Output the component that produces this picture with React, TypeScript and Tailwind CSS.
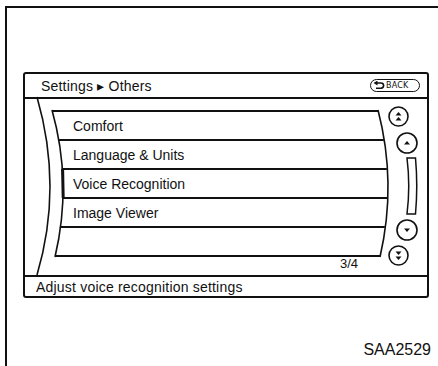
import React from "react";

type Kind = "up2" | "up" | "down" | "down2";

function ScrollButton({ kind, size }: { kind: Kind; size: number }) {
  const c = size / 2;
  const tri = (cy: number, dir: 1 | -1) =>
    `${c - 3},${cy + 1.5 * dir} ${c + 3},${cy + 1.5 * dir} ${c},${cy - 2 * dir}`;
  return (
    <svg width={size} height={size} viewBox={`0 0 ${size} ${size}`} className="block">
      <circle cx={c} cy={c} r={c - 1} fill="white" stroke="#111" strokeWidth="1.6" />
      {kind === "up" && <polygon points={tri(c, 1)} fill="#111" />}
      {kind === "down" && <polygon points={tri(c, -1)} fill="#111" />}
      {kind === "up2" && (
        <>
          <polygon points={tri(c - 2.5, 1)} fill="#111" />
          <polygon points={tri(c + 2.5, 1)} fill="#111" />
        </>
      )}
      {kind === "down2" && (
        <>
          <polygon points={tri(c - 2.5, -1)} fill="#111" />
          <polygon points={tri(c + 2.5, -1)} fill="#111" />
        </>
      )}
    </svg>
  );
}

function BackButton() {
  return (
    <div className="flex h-[13px] w-[50px] items-center rounded-full border-[1.5px] border-[#111] pl-[2px]">
      <svg width="12" height="9" viewBox="0 0 12 9" className="block">
        <path d="M4 2 H8 A2.6 2.6 0 0 1 8 7.2 H3" fill="none" stroke="#111" strokeWidth="1.6" />
        <polygon points="0.5,2 4.5,-0.5 4.5,4.5" fill="#111" />
      </svg>
      <span className="ml-[1px] text-[8px] leading-[8px] tracking-[0.2px] font-['DejaVu_Sans',sans-serif]">
        BACK
      </span>
    </div>
  );
}

const items = ["Comfort", "Language & Units", "Voice Recognition", "Image Viewer", ""];

export default function App() {
  return (
    <div className="h-[366px] w-[438px] overflow-hidden bg-white font-['Liberation_Sans',Arial,sans-serif] text-[#111]">
      {/* outer figure frame */}
      <div className="ml-[5px] mt-[6px] h-[360px] border-l-2 border-t-2 border-[#111] pl-[16px] pt-[64px]">
        {/* screen */}
        <div className="flex h-[226px] w-[406px] flex-col rounded-[3px] border-2 border-[#111]">
          <div className="flex h-[25px] shrink-0 items-center justify-between border-b-2 border-[#111] pl-[16px] pr-[7px]">
            <span className="text-[14px] leading-[14px] tracking-[0.2px]">Settings ▸ Others</span>
            <BackButton />
          </div>

          <div className="relative flex flex-1">
            <div className="flex w-[363px] shrink-0 flex-col">
              <div className="ml-[27px] mt-[11px] w-[336px] border-b-2 border-[#111] [clip-path:polygon(0px_0px,326px_0px,333px_36px,336px_73px,334px_110px,328px_147px,3px_147px,9px_110px,11px_73px,8px_36px)]">
                {items.map((label, i) => (
                  <div
                    key={i}
                    className="flex h-[29px] items-center border-t-2 border-[#111] pl-[21px] text-[14px] leading-[14px]"
                  >
                    {label}
                  </div>
                ))}
              </div>
              <div className="flex justify-end pr-[30px] text-[13px] leading-[14px]">3/4</div>
            </div>

            <div className="flex flex-col items-start">
              <div className="mt-[7px]">
                <ScrollButton kind="up2" size={21} />
              </div>
              <div className="ml-[8px] mt-[5px]">
                <ScrollButton kind="up" size={22} />
              </div>
              <svg width="12" height="58" viewBox="0 0 12 58" className="ml-[18px] mt-[3px] block">
                <path d="M1 1 H9.5 Q12 29 9.5 57 H1 Q4.5 29 1 1 Z" fill="white" stroke="#111" strokeWidth="1.5" />
              </svg>
              <div className="ml-[8px] mt-[4px]">
                <ScrollButton kind="down" size={22} />
              </div>
              <div className="mt-[4px]">
                <ScrollButton kind="down2" size={21} />
              </div>
            </div>

            {/* curved bezel lines */}
            <svg
              width="402"
              height="176"
              viewBox="0 0 402 176"
              className="pointer-events-none absolute left-0 top-0 overflow-visible"
            >
              <path d="M12 -2 Q38 88 12 176" fill="none" stroke="#111" strokeWidth="1.6" />
              <path d="M27 11 Q47.5 84 30 158" fill="none" stroke="#111" strokeWidth="1.6" />
              <path d="M353 11 Q372 84 355 158" fill="none" stroke="#111" strokeWidth="1.6" />
              <path d="M37.6 70 L38.2 99" fill="none" stroke="#111" strokeWidth="3" />
            </svg>
          </div>

          <div className="flex h-[21px] shrink-0 items-center border-t-2 border-[#111] pl-[11px] text-[14px] leading-[14px] tracking-[0.2px]">
            Adjust voice recognition settings
          </div>
        </div>

        <div className="mt-[44px] pr-[7px] text-right text-[16px] leading-[16px]">SAA2529</div>
      </div>
    </div>
  );
}
